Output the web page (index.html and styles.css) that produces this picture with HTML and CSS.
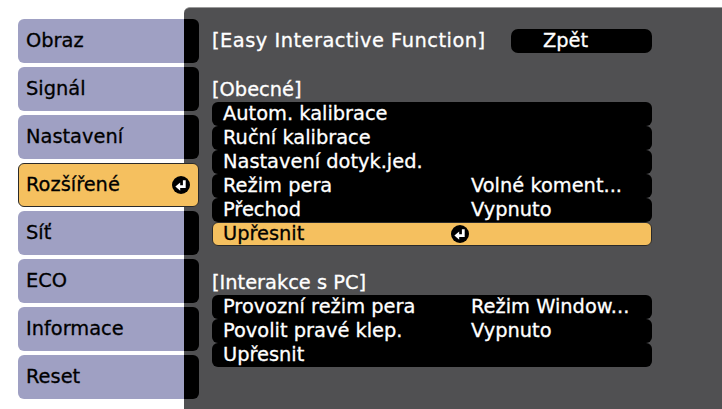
FILE: index.html
```html
<!DOCTYPE html>
<html lang="cs">
<head>
<meta charset="utf-8">
<title>Easy Interactive Function</title>
<link rel="stylesheet" href="styles.css">
</head>
<body>
<div class="screen">
  <nav class="sidebar">
    <div class="tab">Obraz</div>
    <div class="tab">Signál</div>
    <div class="tab">Nastavení</div>
    <div class="tab tab-active">Rozšířené
      <svg class="enter" viewBox="0 0 18 18" width="18" height="18"><circle cx="9" cy="9" r="9" fill="#000"/><path d="M12.3 4.2V10.6H7.4" fill="none" stroke="#fff" stroke-width="2.8"/><polygon points="3.4,10.6 8.2,6.4 8.2,14.8" fill="#fff"/></svg>
    </div>
    <div class="tab">Síť</div>
    <div class="tab">ECO</div>
    <div class="tab">Informace</div>
    <div class="tab">Reset</div>
  </nav>
  <main class="panel">
    <div class="title-row">
      <span class="title">[Easy Interactive Function]</span>
      <span class="back">Zpět</span>
    </div>
    <section class="group group-first">
      <div class="group-head">[Obecné]</div>
      <div class="row"><span class="label">Autom. kalibrace</span></div>
      <div class="row"><span class="label">Ruční kalibrace</span></div>
      <div class="row"><span class="label">Nastavení dotyk.jed.</span></div>
      <div class="row"><span class="label">Režim pera</span><span class="value">Volné koment...</span></div>
      <div class="row"><span class="label">Přechod</span><span class="value">Vypnuto</span></div>
      <div class="row row-active"><span class="label">Upřesnit</span>
        <svg class="enter row-enter" viewBox="0 0 18 18" width="18" height="18"><circle cx="9" cy="9" r="9" fill="#000"/><path d="M12.3 4.2V10.6H7.4" fill="none" stroke="#fff" stroke-width="2.8"/><polygon points="3.4,10.6 8.2,6.4 8.2,14.8" fill="#fff"/></svg>
      </div>
    </section>
    <section class="group group-second">
      <div class="group-head">[Interakce s PC]</div>
      <div class="row"><span class="label">Provozní režim pera</span><span class="value">Režim Window...</span></div>
      <div class="row"><span class="label">Povolit pravé klep.</span><span class="value">Vypnuto</span></div>
      <div class="row"><span class="label">Upřesnit</span></div>
    </section>
  </main>
</div>
</body>
</html>
```

FILE: styles.css
```css
html, body {
  margin: 0;
  padding: 0;
  background: #ffffff;
}

body {
  font-family: "DejaVu Sans", "Liberation Sans", sans-serif;
  font-size: 19.4px;
  -webkit-text-stroke: 0.3px currentColor;
  width: 722px;
  height: 409px;
  overflow: hidden;
}

.screen {
  display: flex;
  align-items: flex-start;
  height: 409px;
}

.sidebar {
  position: relative;
  z-index: 1;
  display: flex;
  flex-direction: column;
  gap: 4px;
  padding: 19px 0 0 18px;
  flex: none;
}

.tab {
  box-sizing: border-box;
  width: 181px;
  height: 44px;
  line-height: 44px;
  padding-left: 8px;
  color: #000;
  border-radius: 6px;
  background: linear-gradient(to right, #9fa0c3 166px, #000 166px);
  display: flex;
  align-items: center;
}

.tab-active {
  background: #f5c05f;
  border: 1px solid #2a2a2a;
  padding-left: 7px;
  justify-content: space-between;
  padding-right: 8px;
}

.enter {
  display: block;
  flex: none;
}

.panel {
  flex: 1;
  box-sizing: border-box;
  margin-top: 7px;
  margin-left: -15px;
  height: 402px;
  background: #505052;
  border-top: 1px solid #9a9a9a;
  border-top-left-radius: 6px;
  padding: 21px 0 0 28px;
  color: #fff;
}

.title-row {
  display: flex;
  align-items: center;
  height: 24px;
  line-height: 24px;
}

.title {
  width: 299px;
  flex: none;
  white-space: nowrap;
  letter-spacing: 0.5px;
}

.back {
  box-sizing: border-box;
  width: 141px;
  height: 24px;
  background: #000;
  border-radius: 7px;
  padding-left: 32px;
}

.group {
  width: 440px;
}

.group-first {
  margin-top: 25px;
}

.group-second {
  margin-top: 25px;
}

.group-head {
  height: 24px;
  line-height: 24px;
}

.row {
  box-sizing: border-box;
  height: 24px;
  line-height: 24px;
  background: #000;
  border-radius: 6px;
  padding-left: 11px;
  display: grid;
  grid-template-columns: 229px 19px 1fr;
  white-space: nowrap;
}

.label {
  grid-column: 1 / 3;
  grid-row: 1;
}

.value {
  grid-column: 3;
  grid-row: 1;
}

.row-active {
  background: #f5c05f;
  color: #000;
  border: 1px solid #2a2a2a;
  padding-left: 10px;
  line-height: 22px;
}

.row-enter {
  grid-column: 2;
  grid-row: 1;
  align-self: center;
  justify-self: start;
  margin-left: -1px;
  width: 18px;
  height: 18px;
}
```
